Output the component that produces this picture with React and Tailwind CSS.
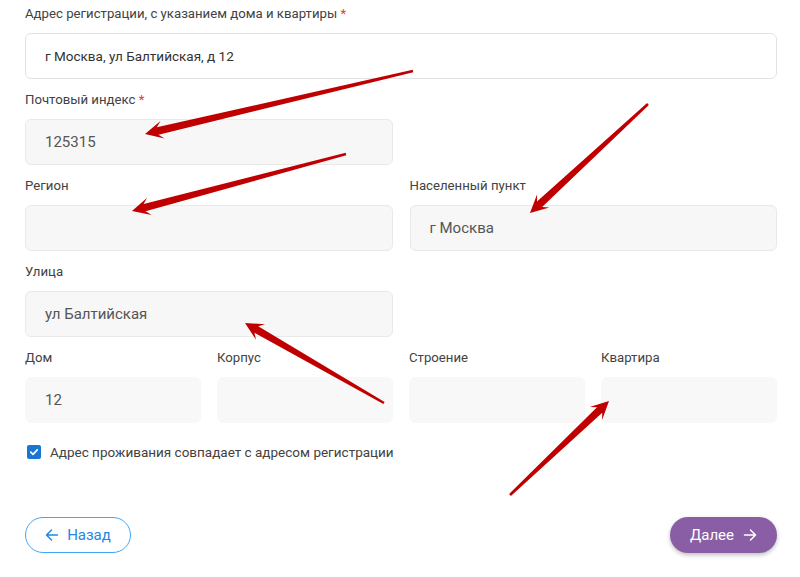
import React from "react";

function arrowPoints(tx, ty, hx, hy) {
  const dx = hx - tx, dy = hy - ty;
  const L = Math.hypot(dx, dy);
  const ux = dx / L, uy = dy / L;
  const nx = -uy, ny = ux;
  const H = 18, W = 9, t0 = 1.3, t1 = 3.8, neck = 13;
  const p = (x, y) => `${x.toFixed(1)},${y.toFixed(1)}`;
  const nkx = hx - ux * neck, nky = hy - uy * neck;
  const bx = hx - ux * H, by = hy - uy * H;
  return [
    p(tx + nx * t0, ty + ny * t0),
    p(nkx + nx * t1, nky + ny * t1),
    p(bx + nx * W, by + ny * W),
    p(hx, hy),
    p(bx - nx * W, by - ny * W),
    p(nkx - nx * t1, nky - ny * t1),
    p(tx - nx * t0, ty - ny * t0),
  ].join(" ");
}

const arrows = [
  [413, 71, 145, 134],
  [346, 154, 132, 211],
  [648, 104, 530, 213],
  [384, 403, 245, 323],
  [510, 495, 609, 401],
];

function Field({ label, required, value, variant = "disabled", big = true }) {
  const box =
    variant === "active"
      ? "bg-white border border-[#e3e3e3]"
      : variant === "flat"
      ? "bg-[#f8f8f8] border border-[#f8f8f8]"
      : "bg-[#f7f7f7] border border-[#e9e9e9]";
  return (
    <div className="flex flex-col">
      <div className="h-[18px] text-[13.2px] leading-[18px] text-[#424242]">
        {label}
        {required && <span className="text-[#e53935]"> *</span>}
      </div>
      <div
        className={`mt-[10px] h-[46px] rounded-[6px] ${box} flex items-center pl-[19px] ${
          big ? "text-[15px] text-[#555]" : "text-[13.5px] text-[#333]"
        }`}
      >
        {value}
      </div>
    </div>
  );
}

export default function App() {
  return (
    <div
      className="relative w-[800px] h-[577px] bg-white overflow-hidden"
      style={{ fontFamily: "Roboto, 'Noto Sans', sans-serif" }}
    >
      <div className="ml-[25px] w-[752px] pt-[5px] flex flex-col gap-[12px]">
        <Field
          label="Адрес регистрации, с указанием дома и квартиры"
          required
          value="г Москва, ул Балтийская, д 12"
          variant="active"
          big={false}
        />
        <div className="grid grid-cols-2 gap-x-[17px]">
          <Field label="Почтовый индекс" required value="125315" />
          <div />
        </div>
        <div className="grid grid-cols-2 gap-x-[17px]">
          <Field label="Регион" value="" />
          <Field label="Населенный пункт" value="г Москва" />
        </div>
        <div className="grid grid-cols-2 gap-x-[17px]">
          <Field label="Улица" value="ул Балтийская" />
          <div />
        </div>
        <div className="grid grid-cols-4 gap-x-[16px]">
          <Field label="Дом" value="12" variant="flat" />
          <Field label="Корпус" value="" variant="flat" />
          <Field label="Строение" value="" variant="flat" />
          <Field label="Квартира" value="" variant="flat" />
        </div>
        <div className="mt-[7px] flex items-center gap-[9px] pl-[2px]">
          <div className="w-[14px] h-[14px] rounded-[2px] bg-[#1976d2] flex items-center justify-center">
            <svg width="10" height="10" viewBox="0 0 10 10">
              <path d="M1.8 5.2 L4 7.3 L8.3 2.8" fill="none" stroke="white" strokeWidth="1.7" strokeLinecap="round" strokeLinejoin="round" />
            </svg>
          </div>
          <span className="text-[13.5px] text-[#424242]">
            Адрес проживания совпадает с адресом регистрации
          </span>
        </div>
        <div className="mt-[43px] flex justify-between">
          <button className="h-[36px] w-[106px] rounded-full border border-[#42a5f5] text-[#1e88e5] text-[15px] flex items-center justify-center gap-[8px]">
            <svg width="14" height="14" viewBox="0 0 14 14" fill="none" stroke="#1e88e5" strokeWidth="1.5" strokeLinecap="round" strokeLinejoin="round">
              <path d="M12.5 7 H1.5 M6.5 2 L1.5 7 L6.5 12" />
            </svg>
            Назад
          </button>
          <button className="h-[36px] w-[107px] rounded-full bg-[#8a5ea4] text-white text-[15px] flex items-center justify-center gap-[9px] shadow-[0_2px_4px_rgba(0,0,0,0.25)]">
            Далее
            <svg width="14" height="14" viewBox="0 0 14 14" fill="none" stroke="white" strokeWidth="1.5" strokeLinecap="round" strokeLinejoin="round">
              <path d="M1.5 7 H12.5 M7.5 2 L12.5 7 L7.5 12" />
            </svg>
          </button>
        </div>
      </div>
      <svg className="absolute inset-0 pointer-events-none" width="800" height="577">
        {arrows.map((a, i) => (
          <polygon key={i} points={arrowPoints(...a)} fill="#c00000" />
        ))}
      </svg>
    </div>
  );
}
